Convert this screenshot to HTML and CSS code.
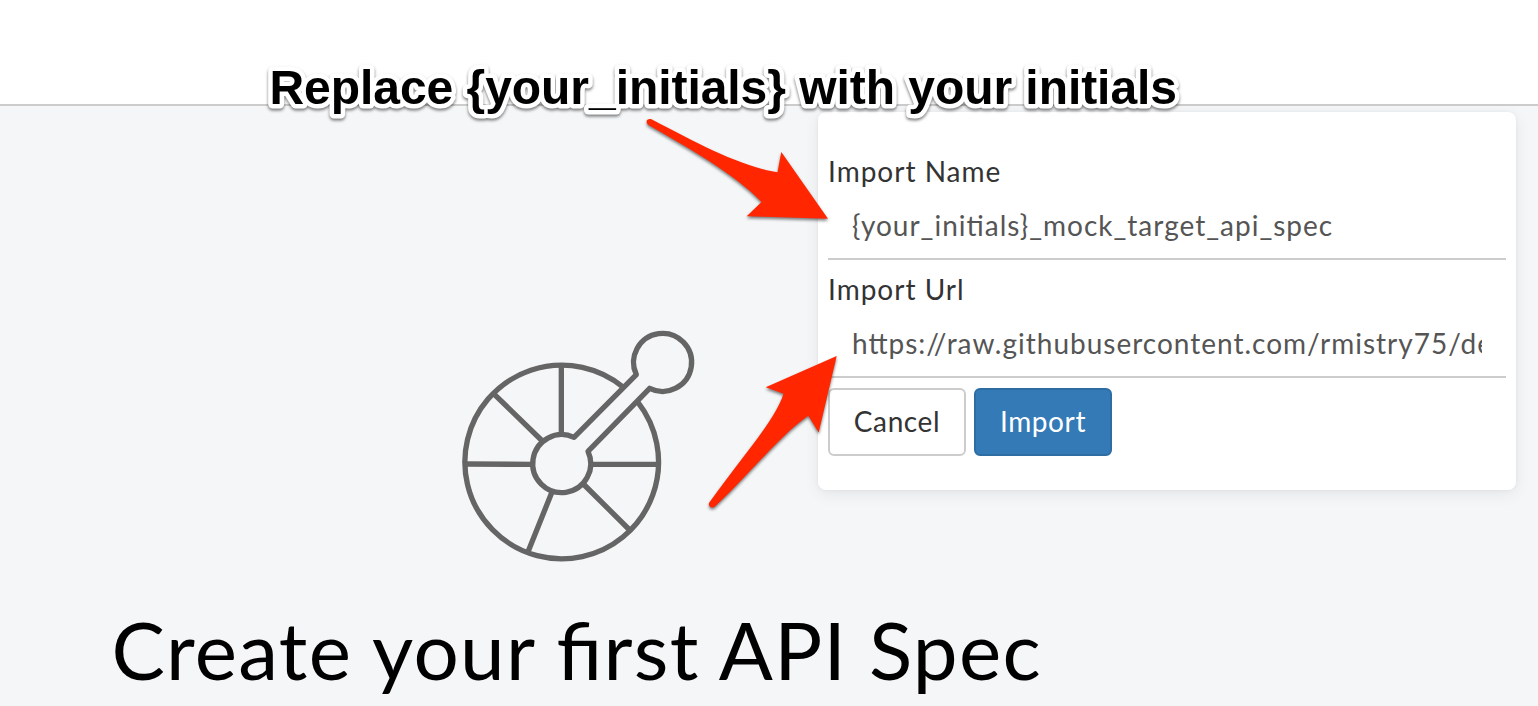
FILE: index.html
```html
<!DOCTYPE html>
<html lang="en">
<head>
<meta charset="utf-8">
<title>Create your first API Spec</title>
<link rel="stylesheet" href="styles.css">
</head>
<body>
<header class="topbar"></header>
<main class="workspace">
  <section class="empty-state">
    <svg class="spec-icon" width="280" height="270" viewBox="0 0 840 810" fill="none" stroke="#646564" stroke-width="16" stroke-linecap="round" stroke-linejoin="round">
      <path d="M549 231A290.500 290.500 0 1 0 594 277"/>
      <path d="M402 382A87 87 0 1 0 444 424L629 235A87 87 0 1 0 589 194Z"/>
      <path stroke-linecap="butt" d="M364 165V375M163 253L307 393M77 462L280 463M452 463L655 463M430 522L569 660M336 546L265 723"/>
    </svg>
    <h1 class="title">Create your first API Spec</h1>
  </section>
  <form class="import-card">
    <label class="label" for="name">Import Name</label>
    <input class="field" id="name" type="text" value="{your_initials}_mock_target_api_spec">
    <label class="label" for="url">Import Url</label>
    <input class="field" id="url" type="text" value="https://raw.githubusercontent.com/rmistry75/dev">
    <div class="actions">
      <button class="btn" type="button">Cancel</button>
      <button class="btn primary" type="button">Import</button>
    </div>
  </form>
</main>
<svg class="annotations" width="1538" height="706" viewBox="0 0 1538 706" fill="#ff2600">
  <path d="M651.500 119.300C697 143 739 166 777.500 172.300L781.300 152L828 218.700L746.700 216.300L761.500 202C735 174 687 147 648.500 125C644.500 121.500 647.500 118 651.500 119.300Z"/>
  <path d="M836.700 356L818.700 432.500L808.300 415.700C781 434 750 474 715 506.500C711 509.500 707 505 709.700 502C742 457 776 419 783.500 393.700L765.700 387.300Z"/>
  <text class="callout" x="269.500" y="104">Replace {your_initials} with your initials</text>
</svg>
</body>
</html>
```
FILE: styles.css
```css
* { box-sizing: border-box; }
body {
  position: relative;
  display: flex;
  flex-direction: column;
  width: 1538px;
  height: 706px;
  margin: 0;
  overflow: hidden;
  background: #f4f6f8;
  color: #333;
  font-family: Lato, sans-serif;
  font-feature-settings: "liga" 1;
}
.topbar {
  flex: none;
  height: 106px;
  background: #fff;
  border-bottom: 2px solid #ccc;
}
.workspace {
  display: flex;
  align-items: flex-start;
  padding: 6px 22px 0 0;
}
.empty-state {
  flex: none;
  display: flex;
  flex-direction: column;
  width: 818px;
  padding-top: 198px;
}
.spec-icon {
  display: block;
  margin-left: 440px;
}
.title {
  margin: 21px 0 0 111.5px;
  color: #000;
  font-size: 80px;
  font-weight: 400;
  line-height: 96px;
  letter-spacing: 1.3px;
  white-space: nowrap;
}
.import-card {
  flex: none;
  display: flex;
  flex-direction: column;
  width: 698px;
  height: 378px;
  padding: 40px 10px 0;
  background: #fff;
  border-radius: 8px;
  box-shadow: 0 4px 16px rgba(0, 0, 0, .07), 0 0 4px rgba(0, 0, 0, .05);
  font-size: 28px;
  letter-spacing: 1px;
}
.label {
  height: 40px;
  line-height: 38px;
}
.field {
  width: 678px;
  height: 68px;
  margin: 0 0 10px;
  padding: 0 24px;
  border: 0;
  border-bottom: 2px solid #ccc;
  border-radius: 0;
  outline: 0;
  background: transparent;
  color: #555;
  font: inherit;
  font-feature-settings: inherit;
  letter-spacing: inherit;
}
.actions {
  display: flex;
  gap: 8px;
}
.btn {
  width: 138px;
  height: 68px;
  padding: 0 0 2px;
  border: 2px solid #ccc;
  border-radius: 6px;
  background: #fff;
  color: #333;
  font: inherit;
  letter-spacing: .6px;
}
.primary {
  border-color: #2e6da4;
  background: #337ab7;
  color: #fff;
}
.annotations {
  position: absolute;
  top: 0;
  left: 0;
  pointer-events: none;
  filter: drop-shadow(0 2px 1.5px rgba(0, 0, 0, .5));
}
.callout {
  fill: #000;
  stroke: #fff;
  stroke-width: 9px;
  stroke-linejoin: round;
  paint-order: stroke fill;
  font: bold 48px "Liberation Sans", Arial, sans-serif;
  letter-spacing: -.05px;
}
```
